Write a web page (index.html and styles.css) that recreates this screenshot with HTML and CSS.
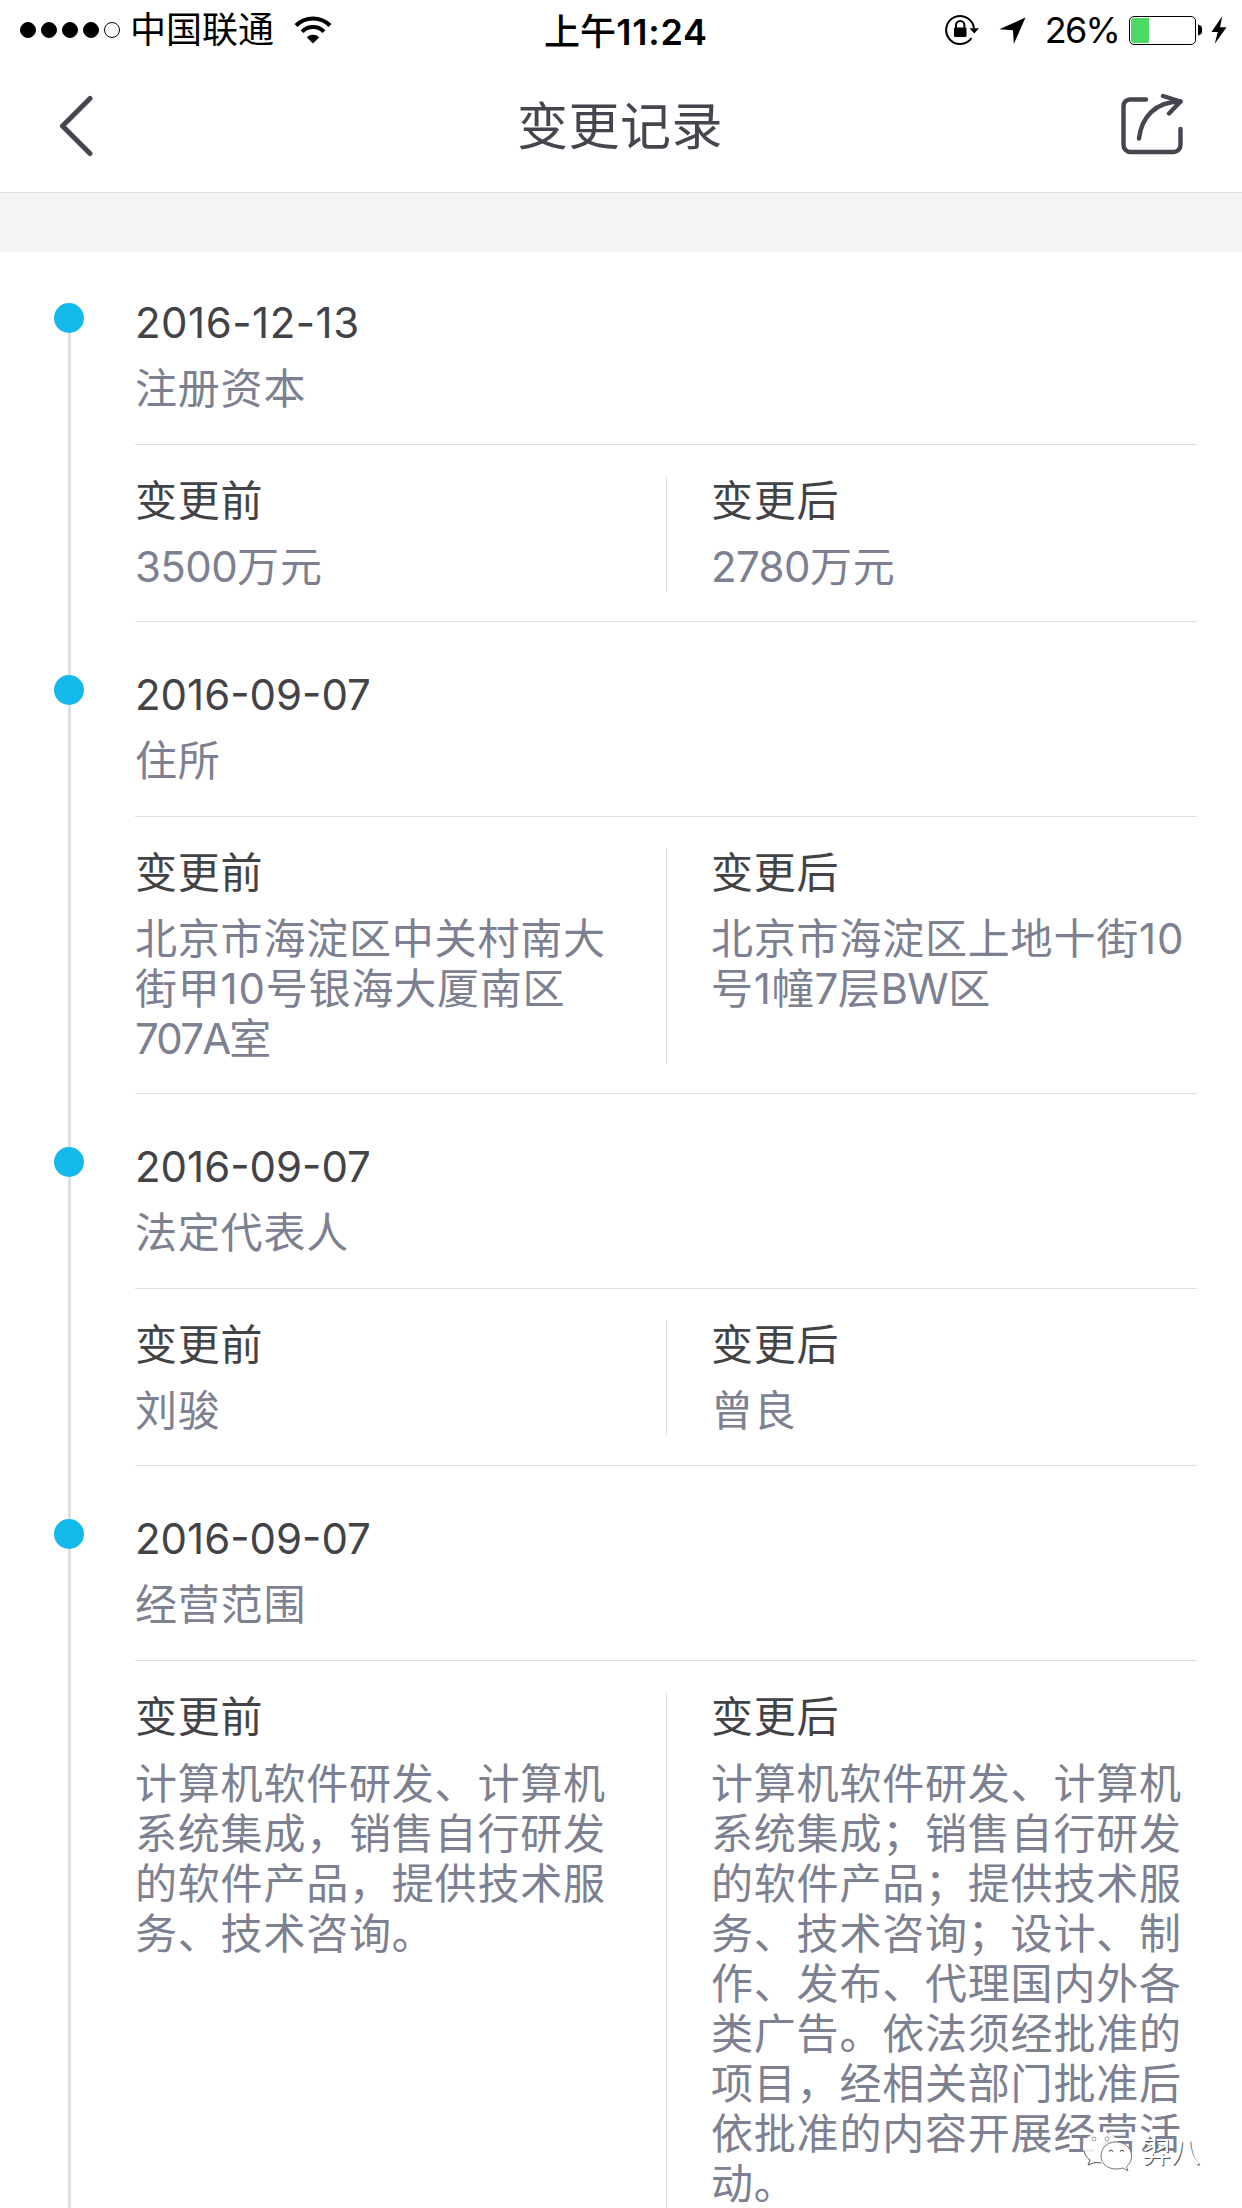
FILE: index.html
```html
<!DOCTYPE html>
<html lang="zh-CN">
<head>
  <meta charset="UTF-8">
  <title>变更记录</title>
  <link rel="stylesheet" href="styles.css">
</head>
<body>

  <div class="status-bar">
    <div class="status-left">
      <div class="signal">
        <i class="on"></i><i class="on"></i><i class="on"></i><i class="on"></i><i></i>
      </div>
      <span class="carrier">中国联通</span>
      <svg class="wifi" width="38" height="28" viewBox="0 0 38 28">
        <path d="M2 9.5A24 24 0 0 1 36 9.5" fill="none" stroke="#000" stroke-width="4"/>
        <path d="M8 15.7A15.5 15.5 0 0 1 30 15.7" fill="none" stroke="#000" stroke-width="4"/>
        <path d="M19 27.5L12.8 21.2A9 9 0 0 1 25.2 21.2Z"/>
      </svg>
    </div>
    <div class="status-time">上午<span>11:24</span></div>
    <div class="status-right">
      <svg class="lock" width="36" height="32" viewBox="0 0 36 32">
        <path d="M26.5 24.2A14 14 0 1 1 29 14" fill="none" stroke="#000" stroke-width="2"/>
        <path d="M24.5 14.3H34L29.3 19.5Z"/>
        <rect x="9" y="13.5" width="12.5" height="9.5" rx="1"/>
        <path d="M11 14V11.2A4.2 4.2 0 0 1 19.4 11.2V14" fill="none" stroke="#000" stroke-width="2"/>
      </svg>
      <svg class="arrow" width="27" height="27" viewBox="0 0 27 27">
        <path d="M26.5 .5L14.8 27L14 13.2L.3 12.3Z"/>
      </svg>
      <span class="percent">26%</span>
      <div class="battery"><div class="level" style="width: 29%"></div></div>
      <svg class="cap" width="4" height="12" viewBox="0 0 4 12"><path d="M0 .5A5.6 5.6 0 0 1 0 11.5Z"/></svg>
      <svg class="bolt" width="16" height="30" viewBox="0 0 17 30">
        <path d="M12 .5L.5 17.2H7.2L4 29.5L16.5 12.2H9.6Z"/>
      </svg>
    </div>
  </div>

  <div class="nav-bar">
    <svg class="back" width="34" height="62" viewBox="0 0 34 62">
      <path d="M31 3.5L3.5 31L31 58.5" fill="none" stroke="#45454f" stroke-width="5" stroke-linecap="round" stroke-linejoin="round"/>
    </svg>
    <h1>变更记录</h1>
    <svg class="share" width="62" height="62" viewBox="0 0 62 62">
      <g fill="none" stroke="#45454f" stroke-width="4.4" stroke-linecap="round" stroke-linejoin="round">
        <path d="M25 6.5H9A6.5 6.5 0 0 0 2.5 13V52A7 7 0 0 0 9.5 59H52A7 7 0 0 0 59.5 52V36"/>
        <path d="M18 45.5C20.5 24.5 34 8.5 59.5 8.5"/>
        <path d="M42 3L59.5 8.5L48 20.5"/>
      </g>
    </svg>
  </div>

  <div class="spacer"></div>

  <div class="timeline">
    <div class="record">
      <div class="rail"><div class="dot"></div></div>
      <div class="content">
        <div class="record-head">
          <div class="dark date">2016-12-13</div>
          <div class="gray">注册资本</div>
        </div>
        <div class="compare">
          <div class="before">
            <div class="dark">变更前</div>
            <div class="gray"><span class="num">3500</span>万元</div>
          </div>
          <div class="after">
            <div class="dark">变更后</div>
            <div class="gray"><span class="num">2780</span>万元</div>
          </div>
        </div>
      </div>
    </div>

    <div class="record">
      <div class="rail"><div class="dot"></div></div>
      <div class="content">
        <div class="record-head">
          <div class="dark date">2016-09-07</div>
          <div class="gray">住所</div>
        </div>
        <div class="compare">
          <div class="before">
            <div class="dark">变更前</div>
            <div class="gray">北京市海淀区中关村南大街甲10号银海大厦南区<span class="num tight">707A</span>室</div>
          </div>
          <div class="after">
            <div class="dark">变更后</div>
            <div class="gray">北京市海淀区上地十街10号1幢<span class="num">7</span>层<span class="num">BW</span>区</div>
          </div>
        </div>
      </div>
    </div>

    <div class="record">
      <div class="rail"><div class="dot"></div></div>
      <div class="content">
        <div class="record-head">
          <div class="dark date">2016-09-07</div>
          <div class="gray">法定代表人</div>
        </div>
        <div class="compare">
          <div class="before">
            <div class="dark">变更前</div>
            <div class="gray">刘骏</div>
          </div>
          <div class="after">
            <div class="dark">变更后</div>
            <div class="gray">曾良</div>
          </div>
        </div>
      </div>
    </div>

    <div class="record">
      <div class="rail"><div class="dot"></div></div>
      <div class="content">
        <div class="record-head">
          <div class="dark date">2016-09-07</div>
          <div class="gray">经营范围</div>
        </div>
        <div class="compare">
          <div class="before">
            <div class="dark">变更前</div>
            <div class="gray">计算机软件研发、计算机系统集成，销售自行研发的软件产品，提供技术服务、技术咨询。</div>
          </div>
          <div class="after">
            <div class="dark">变更后</div>
            <div class="gray">计算机软件研发、计算机系统集成；销售自行研发的软件产品；提供技术服务、技术咨询；设计、制作、发布、代理国内外各类广告。依法须经批准的项目，经相关部门批准后依批准的内容开展经营活动。</div>
          </div>
        </div>
      </div>
    </div>
  </div>

  <div class="watermark">
    <svg width="52" height="46" viewBox="0 0 52 46">
      <path d="M20 2C9 2 1 9 1 18C1 23 4 27 8 30L6 36L13 32.5C16 33.5 19 33.5 22 33C34 33 38 26 37 16C36 8 29 2 20 2Z" fill="#fff" fill-opacity=".88"/>
      <path d="M2 21C3 25 5 28 8 30L6 35L13 32.5L19 33" fill="none" stroke="#555" stroke-width="1"/>
      <circle cx="12" cy="9" r="2" fill="#fff" stroke="#888" stroke-width=".8"/>
      <circle cx="25" cy="9" r="2" fill="#fff" stroke="#888" stroke-width=".8"/>
      <path d="M34 12C25 12 19 18 19 26C19 34 26 39 34 39C37 39 39 38.5 41 38L46 41L44.5 36.5C48 34 49.5 30 49.5 26C49.5 18 43 12 34 12Z" fill="#fff" stroke="#777" stroke-width="1"/>
      <path d="M27 21.5Q29 19 31 21.5M38 21.5Q40 19 42 21.5" fill="none" stroke="#555" stroke-width="1.2"/>
    </svg>
    <span>羿八</span>
  </div>

</body>
</html>
```

FILE: styles.css
```css
* {
  box-sizing: border-box;
}

body {
  margin: 0;
  width: 1242px;
  height: 2208px;
  overflow: hidden;
  position: relative;
  background: #fff;
  font-family: Inter, "Noto Sans CJK SC", sans-serif;
}

svg {
  display: block;
  flex: none;
}

/* status bar */
.status-bar {
  display: flex;
  justify-content: space-between;
  height: 60px;
  padding: 0 15px 0 20px;
  font-size: 36px;
  line-height: 64px;
  color: #000;
}

.status-left,
.status-right {
  display: flex;
  align-items: center;
  height: 60px;
  flex: 1;
}

.status-right {
  justify-content: flex-end;
}

.signal {
  display: flex;
  gap: 5px;
}

.signal i {
  width: 16px;
  height: 16px;
  border: 1px solid #000;
  border-radius: 50%;
}

.signal .on {
  background: #000;
}

.carrier {
  margin-left: 10px;
}

.wifi {
  margin-left: 20px;
}

.status-time {
  padding-left: 5px;
  font-weight: 500;
}

.status-time span {
  font-weight: 600;
  letter-spacing: 0.8px;
}

.arrow {
  margin-left: 18px;
}

.percent {
  margin-left: 19px;
  letter-spacing: -1.8px;
}

.battery {
  width: 67px;
  height: 29px;
  margin-left: 10px;
  padding: 1px;
  border: 1px solid #000;
  border-radius: 5px;
}

.level {
  height: 100%;
  background: #4cd964;
  border-radius: 3px 0 0 3px;
}

.cap {
  margin-left: 2px;
}

.bolt {
  margin-left: 9px;
}

/* nav bar */
.nav-bar {
  display: flex;
  align-items: center;
  justify-content: space-between;
  height: 133px;
  padding: 0 59px;
  border-bottom: 1px solid #dedede;
}

.nav-bar h1 {
  margin: 0;
  padding: 0 0 6px 26px;
  font-size: 51px;
  font-weight: 400;
  letter-spacing: 0.5px;
  color: #45454f;
}

.share {
  margin-bottom: 5px;
}

.spacer {
  height: 59px;
  background: #f4f4f4;
}

/* timeline */
.record {
  display: flex;
}

.rail {
  display: flex;
  flex-direction: column;
  align-items: center;
  width: 135px;
  padding-left: 3px;
}

.rail::before {
  content: "";
  width: 3px;
  height: 53px;
  background: #e0e0e0;
}

.record:first-child .rail::before {
  height: 51px;
  background: none;
}

.rail::after {
  content: "";
  flex: 1;
  width: 3px;
  background: #e0e0e0;
}

.dot {
  width: 30px;
  height: 30px;
  border-radius: 50%;
  background: #12b9ea;
}

.content {
  width: 1062px;
  font-size: 42px;
  line-height: 50px;
  letter-spacing: 0.8px;
}

.dark {
  color: #434347;
}

.gray {
  margin-top: 16px;
  color: #7d8090;
}

.date {
  letter-spacing: 0;
}

.record:first-child .date {
  letter-spacing: 0.5px;
}

.num {
  letter-spacing: -0.6px;
}

.tight {
  letter-spacing: -1.8px;
}

.record-head {
  padding: 48px 0 30px;
  border-bottom: 1px solid #e0e0e2;
}

.record:first-child .record-head {
  padding-top: 46px;
}

.compare {
  display: flex;
  padding: 31px 0 29px;
  border-bottom: 1px solid #e0e0e2;
}

.record:last-child .compare .gray {
  margin-top: 17px;
}

.before {
  width: 532px;
  padding-right: 40px;
  border-right: 1px solid #e0e0e2;
}

.after {
  flex: 1;
  padding-left: 44px;
}

/* watermark over the text */
.watermark {
  position: absolute;
  left: 1082px;
  top: 2130px;
  display: flex;
  align-items: center;
}

.watermark span {
  margin-left: 8px;
  font-size: 29px;
  line-height: 46px;
  color: #fff;
  text-shadow: 1px 1px 0 #555;
}
```
